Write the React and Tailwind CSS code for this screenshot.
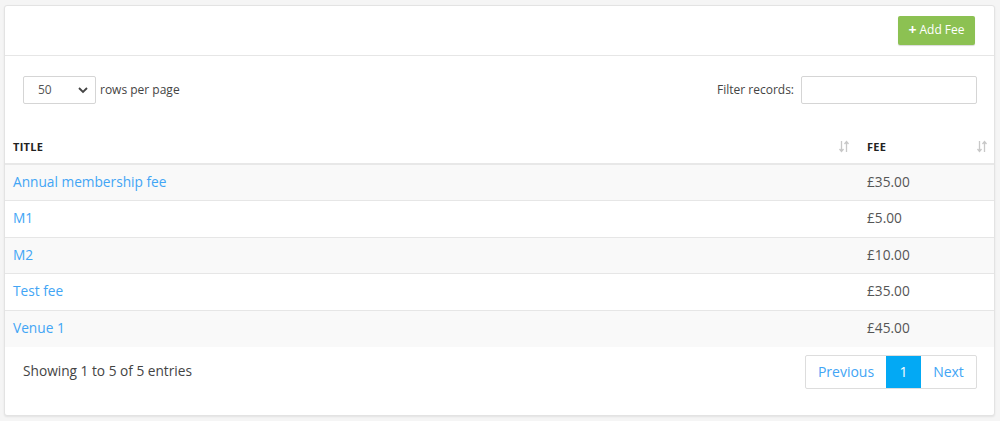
import React, { useState } from 'react';

const fees = [
  { title: 'Annual membership fee', fee: '£35.00' },
  { title: 'M1', fee: '£5.00' },
  { title: 'M2', fee: '£10.00' },
  { title: 'Test fee', fee: '£35.00' },
  { title: 'Venue 1', fee: '£45.00' },
];

const SortIcon = () => (
  <svg width="12" height="13" viewBox="0 0 12 13" className="text-[#c8c8c8]">
    <path d="M3.5 1v10M1.5 9l2 2.5 2-2.5" stroke="currentColor" strokeWidth="1.3" fill="none" />
    <path d="M8.5 12V2M6.5 4l2-2.5 2 2.5" stroke="currentColor" strokeWidth="1.3" fill="none" />
  </svg>
);

const App = () => {
  const [rows, setRows] = useState('50');
  const [filter, setFilter] = useState('');

  return (
    <div className="min-h-[421px] bg-[#f5f5f5] p-[4px] pt-[5px] font-['Open_Sans',sans-serif] text-[#555]">
      <div className="bg-white border border-[#e3e3e3] rounded-[3px] shadow-[0_1px_2px_rgba(0,0,0,0.08)] h-[411px] w-[991px]">
        <div className="h-[50px] border-b border-[#e6e6e6] flex items-center justify-end pr-[19px]">
          <button className="h-[29px] w-[77px] -mt-[1px] bg-[#8cc152] text-white text-[12px] rounded-[2px] flex items-center justify-center gap-[3px] shadow-[0_1px_1px_rgba(0,0,0,0.15)]">
            <span className="font-bold text-[14px] leading-none">+</span>
            <span>Add Fee</span>
          </button>
        </div>

        <div className="flex justify-between pl-[18px] pr-[17px] pt-[20px] h-[74px] items-start">
          <div className="flex items-center gap-[4px]">
            <div className="relative">
              <select
                value={rows}
                onChange={(e) => setRows(e.target.value)}
                className="appearance-none w-[73px] h-[28px] border border-[#d5d5d5] rounded-[2px] pl-[14px] text-[12px] text-[#555] bg-white"
              >
                <option>10</option>
                <option>25</option>
                <option>50</option>
                <option>100</option>
              </select>
              <svg width="10" height="7" viewBox="0 0 10 7" className="absolute right-[8px] top-[11px] pointer-events-none">
                <path d="M1 1l4 4 4-4" stroke="#444" strokeWidth="1.8" fill="none" />
              </svg>
            </div>
            <span className="text-[12px] text-[#444]">rows per page</span>
          </div>
          <div className="flex items-center gap-[7px]">
            <span className="text-[12px] text-[#444]">Filter records:</span>
            <input
              value={filter}
              onChange={(e) => setFilter(e.target.value)}
              className="w-[176px] h-[28px] border border-[#d5d5d5] rounded-[2px] outline-none px-2 text-[12px]"
            />
          </div>
        </div>

        <table className="w-full border-collapse text-[13.7px]">
          <thead>
            <tr className="h-[34px] border-b-2 border-[#e8e8e8]">
              <th className="align-bottom pb-[8px] text-left pl-[8px] text-[11px] font-bold text-[#222] tracking-[0.3px] relative">
                TITLE
                <span className="absolute right-[7px] top-[10px]"><SortIcon /></span>
              </th>
              <th className="align-bottom pb-[8px] text-left pl-[10px] w-[137px] text-[11px] font-bold text-[#222] tracking-[0.3px] relative">
                FEE
                <span className="absolute right-[6px] top-[10px]"><SortIcon /></span>
              </th>
            </tr>
          </thead>
          <tbody>
            {fees.map((f, i) => (
              <tr key={f.title} className={`h-[36.5px] border-b border-[#e6e6e6] last:border-b-0 ${i % 2 === 0 ? 'bg-[#f9f9f9]' : 'bg-white'}`}>
                <td className="pl-[8px]"><a href="#" className="text-[#42a5f5]">{f.title}</a></td>
                <td className="pl-[10px] text-[#555]">{f.fee}</td>
              </tr>
            ))}
          </tbody>
        </table>

        <div className="flex items-center justify-between pl-[18px] pr-[17px] pt-[8px]">
          <span className="text-[13.7px] text-[#444]">Showing 1 to 5 of 5 entries</span>
          <div className="flex h-[34px] border border-[#ddd] rounded-[2px] text-[14px]">
            <a href="#" className="w-[80px] flex items-center justify-center text-[#42a5f5]">Previous</a>
            <a href="#" className="w-[35px] flex items-center justify-center bg-[#03a9f4] text-white">1</a>
            <a href="#" className="w-[55px] flex items-center justify-center text-[#42a5f5]">Next</a>
          </div>
        </div>
      </div>
    </div>
  );
};

export default App;
